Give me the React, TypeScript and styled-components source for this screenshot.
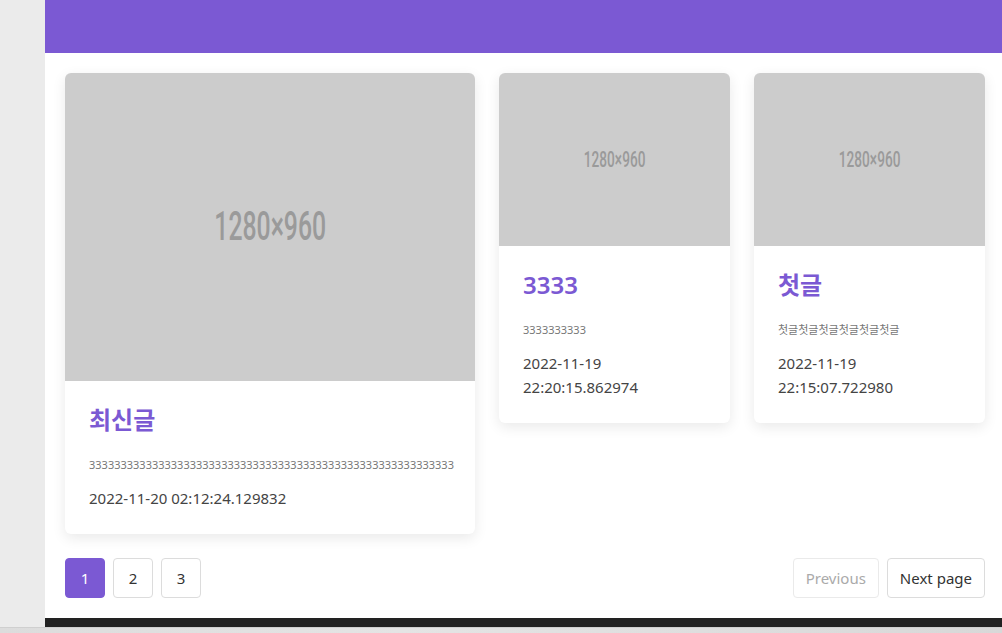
import React from "react";
import styled, { createGlobalStyle } from "styled-components";

const GlobalStyle = createGlobalStyle`
  html, body {
    margin: 0;
    padding: 0;
    background: #ebebeb;
    font-family: "Noto Sans", "Noto Sans CJK KR", sans-serif;
  }
  * {
    box-sizing: border-box;
  }
`;

const Shell = styled.div`
  height: 633px;
  display: grid;
  grid-template-columns: 45px 1fr;
  grid-template-rows: 1fr 6px;
  overflow: hidden;
`;

const Sidebar = styled.aside`
  background: #ebebeb;
`;

const Main = styled.main`
  display: flex;
  flex-direction: column;
  background: #fff;
`;

const Header = styled.header`
  height: 53px;
  background: #7b59d3;
`;

const Content = styled.section`
  flex: 1;
  padding: 20px 17px 20px 20px;
  display: flex;
  flex-direction: column;
  gap: 24px;
`;

const CardGrid = styled.div`
  display: grid;
  grid-template-columns: 410px 231px 231px;
  gap: 24px;
  align-items: start;
`;

const Card = styled.article`
  background: #fff;
  border-radius: 6px;
  overflow: hidden;
  box-shadow: 0 4px 14px rgba(0, 0, 0, 0.09);
`;

const Thumb = styled.div`
  aspect-ratio: 4 / 3;
  background: #cccccc;
  display: flex;
  align-items: center;
  justify-content: center;
`;

const ThumbLabel = styled.span<{ $size: number }>`
  font-family: Roboto, "Liberation Sans", sans-serif;
  font-weight: 500;
  font-size: ${({ $size }) => $size}px;
  color: #9a9a9a;
  transform: scaleX(0.62);
  white-space: nowrap;
`;

const Body = styled.div`
  padding: 24px;
`;

const Title = styled.h2`
  margin: 0 0 21px;
  font-size: 24px;
  line-height: 30px;
  font-weight: 600;
  color: #7b59d3;
`;

const Desc = styled.p`
  margin: 0 0 12px;
  font-size: 11px;
  line-height: 18px;
  color: #777;
  white-space: nowrap;
`;

const Date = styled.div`
  font-size: 15px;
  line-height: 24px;
  color: #444;
`;

const Pager = styled.nav`
  display: flex;
  align-items: center;
  justify-content: space-between;
`;

const PageGroup = styled.div`
  display: flex;
  gap: 8px;
`;

const PageButton = styled.button<{ $active?: boolean }>`
  height: 40px;
  min-width: 40px;
  padding: 0 12px;
  border-radius: 4px;
  border: 1px solid ${({ $active }) => ($active ? "#7b59d3" : "#dcdcdc")};
  background: ${({ $active }) => ($active ? "#7b59d3" : "#fff")};
  color: ${({ $active }) => ($active ? "#fff" : "#333")};
  font-family: "Noto Sans", sans-serif;
  font-size: 15px;
  cursor: pointer;

  &:disabled {
    color: #aaa;
    border-color: #eaeaea;
    cursor: default;
  }
`;

const Footer = styled.footer`
  height: 9px;
  background: #222;
`;

const BottomStrip = styled.div`
  grid-column: 1 / -1;
  background: linear-gradient(90deg, #dcdcdc, #e4e4e4 40%, #d8d8d8);
  border-top: 1px solid #cfcfcf;
`;

const posts = [
  {
    title: "최신글",
    desc: "3333333333333333333333333333333333333333333333333333333333",
    date: "2022-11-20 02:12:24.129832",
    size: 40,
  },
  {
    title: "3333",
    desc: "3333333333",
    date: "2022-11-19 22:20:15.862974",
    size: 22,
  },
  {
    title: "첫글",
    desc: "첫글첫글첫글첫글첫글첫글",
    date: "2022-11-19 22:15:07.722980",
    size: 22,
  },
];

const App = () => {
  return (
    <>
      <GlobalStyle />
      <Shell>
        <Sidebar />
        <Main>
          <Header />
          <Content>
            <CardGrid>
              {posts.map((p) => (
                <Card key={p.title}>
                  <Thumb>
                    <ThumbLabel $size={p.size}>1280×960</ThumbLabel>
                  </Thumb>
                  <Body>
                    <Title>{p.title}</Title>
                    <Desc>{p.desc}</Desc>
                    <Date>{p.date}</Date>
                  </Body>
                </Card>
              ))}
            </CardGrid>
            <Pager>
              <PageGroup>
                <PageButton $active>1</PageButton>
                <PageButton>2</PageButton>
                <PageButton>3</PageButton>
              </PageGroup>
              <PageGroup>
                <PageButton disabled>Previous</PageButton>
                <PageButton>Next page</PageButton>
              </PageGroup>
            </Pager>
          </Content>
          <Footer />
        </Main>
        <BottomStrip />
      </Shell>
    </>
  );
};

export default App;
